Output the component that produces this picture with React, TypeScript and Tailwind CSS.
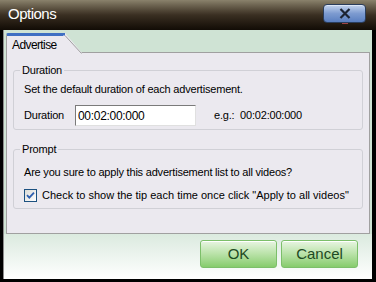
import React from "react";

function GroupBox({ title, children, className }: { title: string; children: React.ReactNode; className?: string }) {
  return (
    <fieldset className={`rounded-[3px] border border-[#d0d0d6] px-[10px] ${className ?? ""}`}>
      <legend className="ml-[-4px] px-[2px] leading-[14px] text-black">{title}</legend>
      {children}
    </fieldset>
  );
}

function GreenButton({ label }: { label: string }) {
  return (
    <button className="h-[28px] w-[77px] rounded-[3px] border border-[#7cbf6a] bg-gradient-to-b from-[#e8f5e2] via-[#b9e2a8] to-[#86cc6c] text-[15px] text-[#1e4a23] shadow-[inset_0_1px_0_#ffffff]">
      {label}
    </button>
  );
}

export default function App() {
  return (
    <div
      className="flex h-[282px] w-[376px] flex-col bg-black text-black"
      style={{ fontFamily: '"Liberation Sans", Arial, sans-serif' }}
    >
      {/* Title bar */}
      <div className="flex h-[30px] items-start justify-between bg-gradient-to-b from-[#8a826c] via-[#3a2f22] to-[#120c06] pl-[8px] pr-[10px]">
        <span className="mt-[5px] text-[15px] leading-[18px] tracking-[-0.5px] text-white">Options</span>
        <div className="relative mt-[4px] flex h-[19px] w-[43px] items-center justify-center rounded-[4px] border border-[#2a3d5c] bg-gradient-to-b from-[#c4d4ee] via-[#7d9bd0] to-[#5a7fc0] shadow-[inset_0_1px_0_#dbe6f7]">
          <svg width="12" height="11" viewBox="0 0 12 11">
            <path d="M1.5 1 L10.5 10 M10.5 1 L1.5 10" stroke="#1c2433" strokeWidth="2.2" />
          </svg>
          <div className="absolute bottom-[-2px] left-[18px] h-[1px] w-[6px] bg-[#a04545]" />
        </div>
      </div>

      {/* Body */}
      <div className="ml-[3px] mr-[4px] mb-[3px] flex flex-1 flex-col border-l border-[#8c8c8c] bg-[#cfe3d4]">
        {/* Tab strip */}
        <div className="flex h-[22px] items-end pl-[2px]">
          <div className="relative -mb-[1px] flex h-[20px] w-[58px] items-center rounded-tl-[2px] border-t-[3px] border-l border-[#3f6fc3] border-l-[#a0a0a0] bg-[#ebe9ef] pl-[5px] text-[12px] tracking-[-0.6px]">
            Advertise
            <svg className="absolute right-[-18px] top-[-3px]" width="19" height="21" viewBox="0 0 19 21">
              <path d="M0 0 L2 0 L19 20 L19 21 L0 21 Z" fill="#ebe9ef" />
              <path d="M2 2.5 L18.5 20.5" stroke="#a0a0a0" fill="none" />
              <path d="M0 1 L2 1" stroke="#3f6fc3" strokeWidth="3" />
            </svg>
          </div>
        </div>

        {/* Panel */}
        <div className="ml-[2px] mr-[2px] flex h-[182px] flex-col border border-[#a0a0a0] bg-[#ebe9ef] px-[6px] pt-[10px] text-[11px] tracking-[-0.2px]">
          <GroupBox title="Duration" className="h-[67px]">
            <div className="mt-[5px] leading-[14px]">Set the default duration of each advertisement.</div>
            <div className="mt-[9px] flex items-center">
              <span className="w-[51px]">Duration</span>
              <input
                readOnly
                value="00:02:00:000"
                className="h-[21px] w-[121px] border border-[#7a7a7a] border-b-[#e0e0e0] border-r-[#e0e0e0] bg-white px-[2px] text-[12px] tracking-[-0.3px] outline-none"
              />
              <span className="ml-[18px]">e.g.:&nbsp;&nbsp;00:02:00:000</span>
            </div>
          </GroupBox>
          <GroupBox title="Prompt" className="mt-[12px] h-[67px]">
            <div className="mt-[9px] leading-[14px]">Are you sure to apply this advertisement list to all videos?</div>
            <div className="mt-[8px] flex items-center whitespace-nowrap">
              <span className="flex h-[13px] w-[13px] shrink-0 items-center justify-center border border-[#1c5180] bg-gradient-to-br from-[#dcdcd7] to-white">
                <svg width="9" height="9" viewBox="0 0 9 9">
                  <path d="M1 4.2 L3.3 6.6 L8 1.6" stroke="#2f5fb0" strokeWidth="1.8" fill="none" />
                </svg>
              </span>
              <span className="ml-[5px] tracking-[0px]">Check to show the tip each time once click "Apply to all videos"</span>
            </div>
          </GroupBox>
        </div>

        {/* Footer */}
        <div className="flex flex-1 items-start justify-end gap-[4px] bg-gradient-to-b from-[#dbeadf] to-white pr-[14px] pt-[6px]">
          <GreenButton label="OK" />
          <GreenButton label="Cancel" />
        </div>
      </div>
    </div>
  );
}
